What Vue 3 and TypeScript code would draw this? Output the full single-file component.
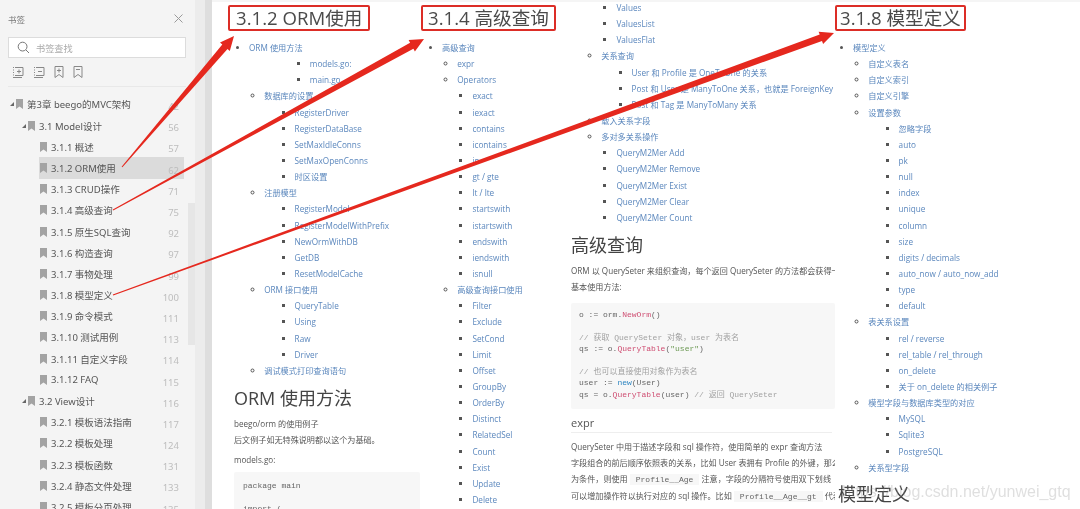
<script setup lang="ts">
type Row = { text: string; level: number; page: string; active?: boolean; open?: boolean };
type Item = [number, string];

const rows: Row[] = [
  { text: '第3章 beego的MVC架构', level: 0, page: '42', open: true },
  { text: '3.1 Model设计', level: 1, page: '56', open: true },
  { text: '3.1.1 概述', level: 2, page: '57' },
  { text: '3.1.2 ORM使用', level: 2, page: '62', active: true },
  { text: '3.1.3 CRUD操作', level: 2, page: '71' },
  { text: '3.1.4 高级查询', level: 2, page: '75' },
  { text: '3.1.5 原生SQL查询', level: 2, page: '92' },
  { text: '3.1.6 构造查询', level: 2, page: '97' },
  { text: '3.1.7 事物处理', level: 2, page: '99' },
  { text: '3.1.8 模型定义', level: 2, page: '100' },
  { text: '3.1.9 命令模式', level: 2, page: '111' },
  { text: '3.1.10 测试用例', level: 2, page: '113' },
  { text: '3.1.11 自定义字段', level: 2, page: '114' },
  { text: '3.1.12 FAQ', level: 2, page: '115' },
  { text: '3.2 View设计', level: 1, page: '116', open: true },
  { text: '3.2.1 模板语法指南', level: 2, page: '117' },
  { text: '3.2.2 模板处理', level: 2, page: '124' },
  { text: '3.2.3 模板函数', level: 2, page: '131' },
  { text: '3.2.4 静态文件处理', level: 2, page: '133' },
  { text: '3.2.5 模板分页处理', level: 2, page: '135' },
];

const ormList: Item[] = [
  [0, 'ORM 使用方法'], [4, 'models.go:'], [4, 'main.go'], [1, '数据库的设置'],
  [3, 'RegisterDriver'], [3, 'RegisterDataBase'], [3, 'SetMaxIdleConns'], [3, 'SetMaxOpenConns'], [3, '时区设置'],
  [1, '注册模型'], [3, 'RegisterModel'], [3, 'RegisterModelWithPrefix'], [3, 'NewOrmWithDB'], [3, 'GetDB'], [3, 'ResetModelCache'],
  [1, 'ORM 接口使用'], [3, 'QueryTable'], [3, 'Using'], [3, 'Raw'], [3, 'Driver'], [1, '调试模式打印查询语句'],
];

const queryList: Item[] = [
  [0, '高级查询'], [1, 'expr'], [1, 'Operators'],
  ...['exact', 'iexact', 'contains', 'icontains', 'in', 'gt / gte', 'lt / lte', 'startswith', 'istartswith', 'endswith', 'iendswith', 'isnull'].map((t): Item => [2, t]),
  [1, '高级查询接口使用'],
  ...['Filter', 'Exclude', 'SetCond', 'Limit', 'Offset', 'GroupBy', 'OrderBy', 'Distinct', 'RelatedSel', 'Count', 'Exist', 'Update', 'Delete'].map((t): Item => [2, t]),
];

const relList: Item[] = [
  [2, 'Values'], [2, 'ValuesList'], [2, 'ValuesFlat'], [1, '关系查询'],
  [3, 'User 和 Profile 是 OneToOne 的关系'], [3, 'Post 和 User 是 ManyToOne 关系，也就是 ForeignKey'], [3, 'Post 和 Tag 是 ManyToMany 关系'],
  [1, '载入关系字段'], [1, '多对多关系操作'],
  [2, 'QueryM2Mer Add'], [2, 'QueryM2Mer Remove'], [2, 'QueryM2Mer Exist'], [2, 'QueryM2Mer Clear'], [2, 'QueryM2Mer Count'],
];

const modelList: Item[] = [
  [0, '模型定义'], [1, '自定义表名'], [1, '自定义索引'], [1, '自定义引擎'], [1, '设置参数'],
  ...['忽略字段', 'auto', 'pk', 'null', 'index', 'unique', 'column', 'size', 'digits / decimals', 'auto_now / auto_now_add', 'type', 'default'].map((t): Item => [3, t]),
  [1, '表关系设置'],
  ...['rel / reverse', 'rel_table / rel_through', 'on_delete', '关于 on_delete 的相关例子'].map((t): Item => [3, t]),
  [1, '模型字段与数据库类型的对应'], [3, 'MySQL'], [3, 'Sqlite3'], [3, 'PostgreSQL'], [1, '关系型字段'],
];

// tapered arrow: thin at the tail, wide at the shoulder, then a head
function arrow(x1: number, y1: number, x2: number, y2: number): string {
  const len = Math.hypot(x2 - x1, y2 - y1);
  const ux = (x2 - x1) / len;
  const uy = (y2 - y1) / len;
  const nx = -uy;
  const ny = ux;
  const bx = x2 - ux * 14;
  const by = y2 - uy * 14;
  const pts = [
    [x1 + nx * 0.5, y1 + ny * 0.5],
    [bx + nx * 3.4, by + ny * 3.4],
    [bx + nx * 6.5, by + ny * 6.5],
    [x2, y2],
    [bx - nx * 6.5, by - ny * 6.5],
    [bx - nx * 3.4, by - ny * 3.4],
    [x1 - nx * 0.5, y1 - ny * 0.5],
  ];
  return pts.map((p) => p.map((n) => n.toFixed(1)).join(',')).join(' ');
}

const arrows = [
  arrow(122, 167, 234, 36),
  arrow(113, 210, 424, 39),
  arrow(113, 295, 834, 33),
];
</script>

<template>
  <div class="screen">
    <aside class="side">
      <div class="side-head">
        <span>书签</span>
        <svg width="11" height="11" viewBox="0 0 11 11"><path d="M1.5 1.5l8 8M9.5 1.5l-8 8" stroke="#9a9a9a" stroke-width="1" fill="none" /></svg>
      </div>
      <div class="search">
        <svg width="13" height="13" viewBox="0 0 13 13"><circle cx="5.6" cy="5.6" r="4.4" stroke="#777" fill="none" /><path d="M9 9l3 3" stroke="#777" fill="none" /></svg>
        <span>书签查找</span>
      </div>
      <div class="tools">
        <svg width="12" height="12" viewBox="0 0 12 12" fill="none" stroke="#888"><path d="M3 1.5h8v8H3M1 1.5h1M1 4h1M1 6.500h1M1 9h1M1 11.500h9M5 5.500h4M7 3.500v4" /></svg>
        <svg width="12" height="12" viewBox="0 0 12 12" fill="none" stroke="#888"><path d="M3 1.500h8v8H3M1 1.500h1M1 4h1M1 6.500h1M1 9h1M1 11.500h9M5 5.500h4" /></svg>
        <svg width="10" height="12" viewBox="0 0 10 12" fill="none" stroke="#888"><path d="M1 .5h8v11L5 8.500 1 11.500zM3 4.500h4M5 2.500v4" /></svg>
        <svg width="10" height="12" viewBox="0 0 10 12" fill="none" stroke="#888"><path d="M1 .5h8v11L5 8.500 1 11.500zM3 3.500h4" /></svg>
      </div>
      <div class="tree">
        <div v-for="row in rows" :key="row.text" class="row" :class="['lv' + row.level, { active: row.active }]">
          <i v-if="row.open" class="tri"></i>
          <svg class="mark" width="7" height="10" viewBox="0 0 7 10"><path d="M0 0h7v10L3.500 7.600 0 10z" fill="#a3a3a3" /></svg>
          <span class="label">{{ row.text }}</span>
          <span class="page-no">{{ row.page }}</span>
        </div>
      </div>
      <div class="thumb"></div>
    </aside>
    <div class="gutter"></div>

    <main class="doc">
      <section class="col col1">
        <div class="head"><h2 class="title">3.1.2 ORM使用</h2></div>
        <ul class="list">
          <li v-for="[lv, t] in ormList" :key="t" :class="'i' + lv"><a>{{ t }}</a></li>
        </ul>
        <h1>ORM 使用方法</h1>
        <p class="first">beego/orm 的使用例子</p>
        <p>后文例子如无特殊说明都以这个为基础。</p>
        <p class="gap">models.go:</p>
        <pre class="code short">package main

import (</pre>
      </section>

      <section class="col col2">
        <div class="head"><h2 class="title">3.1.4 高级查询</h2></div>
        <ul class="list">
          <li v-for="[lv, t] in queryList" :key="t" :class="'i' + lv"><a>{{ t }}</a></li>
        </ul>
      </section>

      <section class="col col3">
        <ul class="list">
          <li v-for="[lv, t] in relList" :key="t" :class="'i' + lv"><a>{{ t }}</a></li>
        </ul>
        <h1>高级查询</h1>
        <p class="first">ORM 以 QuerySeter 来组织查询，每个返回 QuerySeter 的方法都会获得一个新的对象</p>
        <p>基本使用方法:</p>
        <pre class="code">o := orm.<b class="fn">NewOrm</b>()

<span class="cm">// 获取 QuerySeter 对象，user 为表名</span>
qs := o.<b class="fn">QueryTable</b>(<b class="str">"user"</b>)

<span class="cm">// 也可以直接使用对象作为表名</span>
user := <b class="kw">new</b>(User)
qs = o.<b class="fn">QueryTable</b>(user) <span class="cm">// 返回 QuerySeter</span></pre>
        <h3>expr</h3>
        <p class="first">QuerySeter 中用于描述字段和 sql 操作符，使用简单的 expr 查询方法</p>
        <p>字段组合的前后顺序依照表的关系，比如 User 表拥有 Profile 的外键，那么</p>
        <p>为条件，则使用 <code>Profile__Age</code> 注意，字段的分隔符号使用双下划线</p>
        <p>可以增加操作符以执行对应的 sql 操作。比如 <code>Profile__Age__gt</code> 代表</p>
      </section>

      <section class="col col4">
        <div class="head"><h2 class="title">3.1.8 模型定义</h2></div>
        <ul class="list">
          <li v-for="[lv, t] in modelList" :key="t" :class="'i' + lv"><a>{{ t }}</a></li>
        </ul>
        <h1 class="model">模型定义</h1>
      </section>
    </main>

    <div class="watermark">https://blog.csdn.net/yunwei_gtq</div>
    <svg class="arrows" width="1080" height="509" viewBox="0 0 1080 509">
      <polygon v-for="p in arrows" :key="p" :points="p" fill="#e5281e" />
    </svg>
  </div>
</template>

<style scoped>
.screen {
  position: relative;
  display: flex;
  width: 1080px;
  height: 509px;
  overflow: hidden;
  background: #fff;
  color: #555;
  font-family: "Open Sans", "Noto Sans CJK SC", sans-serif;
  filter: blur(0.4px);
}
.side {
  position: relative;
  width: 195px;
  flex: none;
  background: #f4f4f4;
  font-family: "Noto Sans", "Noto Sans CJK SC", sans-serif;
}
.side-head {
  display: flex;
  justify-content: space-between;
  align-items: center;
  height: 37px;
  padding: 0 11px 0 8px;
  font-size: 8.5px;
  color: #777;
}
.search {
  display: flex;
  align-items: center;
  gap: 6px;
  height: 21px;
  margin: 0 9px 0 8px;
  padding-left: 8px;
  box-sizing: border-box;
  background: #fff;
  border: 1px solid #dcdcdc;
  font-size: 9.2px;
  color: #aaa;
}
.tools {
  display: flex;
  align-items: center;
  gap: 9px;
  height: 28px;
  margin: 0 9px 0 8px;
  padding-left: 4px;
  border-bottom: 1px solid #e8e8e8;
  box-sizing: content-box;
}
.tree {
  padding-top: 6.8px;
}
.row {
  position: relative;
  display: flex;
  align-items: center;
  height: 21.2px;
  font-size: 9.5px;
  color: #555;
  white-space: nowrap;
}
.lv0 { padding-left: 16px; }
.lv1 { padding-left: 28px; }
.lv2 { padding-left: 40px; margin-right: 11px; }
.active {
  background: #dbdbdb;
  margin-left: 39px;
  padding-left: 1px;
}
.tri {
  position: absolute;
  width: 0;
  height: 0;
  margin-left: -6px;
  border-style: solid;
  border-width: 0 0 4px 4px;
  border-color: transparent transparent #666 transparent;
}
.mark {
  flex: none;
  margin-right: 4px;
}
.page-no {
  position: absolute;
  top: 6.300px;
  right: 16px;
  font-size: 9.5px;
  color: #bdbdbd;
}
.lv2 .page-no {
  right: 5px;
}
.thumb {
  position: absolute;
  top: 203px;
  right: 0;
  width: 7px;
  height: 142px;
  background: #e6e6e6;
}
.gutter {
  width: 17px;
  flex: none;
  box-sizing: border-box;
  background: #ececec;
  border-right: 7px solid #dedede;
}
.doc {
  display: flex;
  flex: 1;
  min-width: 0;
  border-top: 2px solid #f5f5f5;
  margin-top: 0;
}
.col {
  flex: none;
  overflow: hidden;
  white-space: nowrap;
  margin-top: -2px;
}
.col1 { width: 208px; }
.col2 { width: 140px; }
.col3 { width: 275px; padding-left: 11px; box-sizing: border-box; }
.col4 { flex: 1; min-width: 0; width: auto; overflow: visible; }
.head {
  height: 40px;
  box-sizing: border-box;
  padding-top: 5px;
}
.title {
  display: inline-block;
  margin: 0;
  padding: 0 5px;
  height: 26px;
  box-sizing: border-box;
  border: 2px solid #dc2d26;
  border-radius: 2px;
  font-size: 18.600px;
  line-height: 21px;
  font-weight: 400;
  color: #4a4a4a;
}
.col1 .title { margin-left: 16px; padding: 0 6px; }
.col2 .title { margin-left: 1px; }
.col4 .title { padding: 0 3px; }
.list {
  list-style: none;
  margin: 0;
  padding: 0;
  font-size: 8.2px;
  line-height: 16.14px;
}
.list a {
  color: #5b87bd;
}
.list li { list-style-position: outside; }
.i0 { list-style-type: disc !important; }
.i1 { list-style-type: circle !important; }
.i2, .i3, .i4 { list-style-type: square !important; }
.col1 .list { margin-left: 37px; }
.col2 .list { margin-left: 22px; }
.col3 .list { margin-left: 15px; }
.col4 .list { margin-left: 18px; }
.i1 { margin-left: 15.2px; }
.i2 { margin-left: 30.4px; }
.i3 { margin-left: 45.6px; }
.i4 { margin-left: 60.8px; }
h1 {
  margin: 7px 0 0;
  font-size: 18px;
  line-height: 24px;
  font-weight: 400;
  color: #444;
}
.col1 h1, .col1 p, .col1 .code { margin-left: 22px; }
h1.model {
  margin-top: 6px;
  margin-left: 3px;
}
p {
  margin: 0;
  font-size: 8.1px;
  line-height: 16.14px;
  color: #555;
}
p.first { margin-top: 6px; }
p.gap { margin-top: 4px; }
.code {
  margin: 8px 0 0;
  padding: 6px 8px 9px;
  background: #f7f7f7;
  border-radius: 2px;
  font-family: "Liberation Mono", "Noto Sans CJK SC", monospace;
  font-size: 8px;
  line-height: 11.35px;
  color: #666;
}
.code.short {
  margin-top: 4px;
  padding: 8px 9px;
  height: 60px;
}
.code b { font-weight: 400; }
.fn { color: #cf4f73; }
.str { color: #6d9a55; }
.kw { color: #2f86c1; }
.cm { color: #a3a3a3; }
h3 {
  margin: 7px 3px 0 0;
  padding-bottom: 2px;
  border-bottom: 1px solid #eee;
  font-size: 11px;
  line-height: 14px;
  font-weight: 400;
  color: #555;
}
code {
  padding: 1px 6px;
  background: #f7f7f7;
  font-family: "Liberation Mono", monospace;
  font-size: 8px;
  color: #666;
}
.watermark {
  position: absolute;
  left: 842px;
  top: 483px;
  font-family: "Liberation Sans", sans-serif;
  font-size: 16px;
  color: rgba(140, 140, 140, 0.28);
  white-space: nowrap;
}
.arrows {
  position: absolute;
  top: 0;
  left: 0;
}
</style>

<style>
html, body {
  margin: 0;
  overflow: hidden;
}
</style>
